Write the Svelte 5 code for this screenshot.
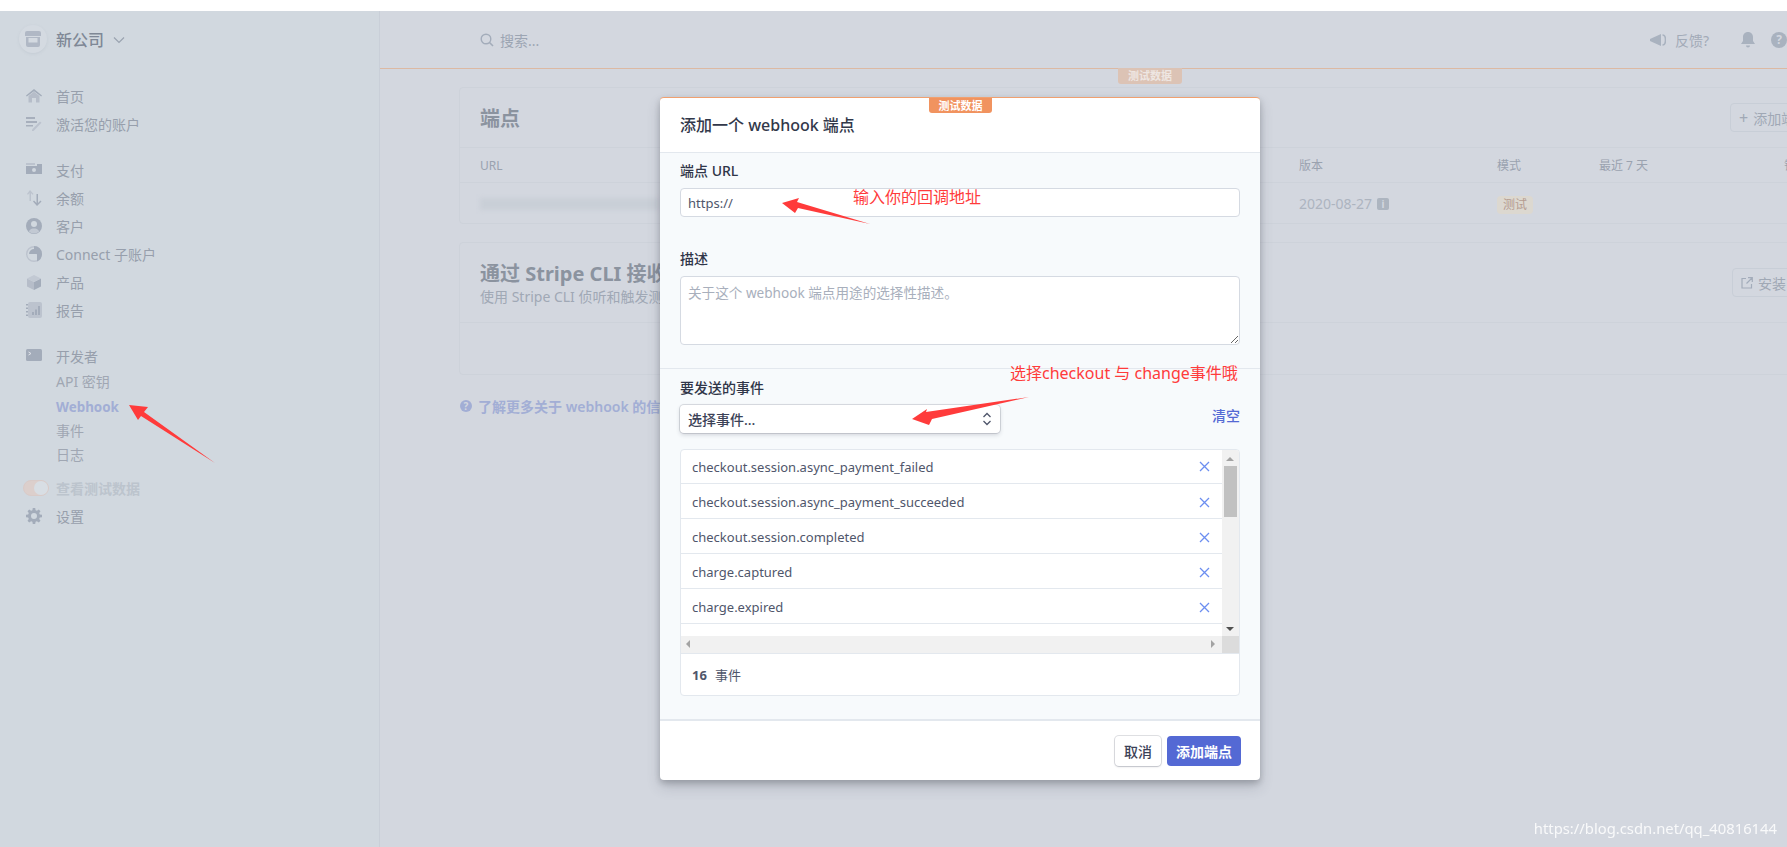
<script>
  const events = [
    "checkout.session.async_payment_failed",
    "checkout.session.async_payment_succeeded",
    "checkout.session.completed",
    "charge.captured",
    "charge.expired"
  ];
</script>

<div class="page">
  <aside class="sidebar">
    <div class="account">
      <span class="logo">
        <svg width="16" height="16" viewBox="0 0 16 16"><path d="M2 0h12a2 2 0 0 1 2 2v3H0V2a2 2 0 0 1 2-2z" fill="#b0b8c5"/><path d="M1 6h14v8a2 2 0 0 1-2 2H3a2 2 0 0 1-2-2z M3.500 7v4.500h9V7z" fill="#b0b8c5" fill-rule="evenodd"/></svg>
      </span>
      <span class="company">新公司</span>
      <svg class="caret" width="12" height="8" viewBox="0 0 12 8"><path d="M1 1.500l5 5 5-5" fill="none" stroke="#9aa3b0" stroke-width="1.200"/></svg>
    </div>

    <nav class="group first">
      <div class="item">
        <svg width="16" height="16" viewBox="0 0 16 16"><path d="M8 1l8 6.500-.8 1L8 3.200.8 8.500 0 7.500z" fill="#a3acba"/><path d="M2.500 8L8 3.800 13.500 8v6.500h-3.500V10H6v4.500H2.500z" fill="#b6bdc9"/></svg>
        <span>首页</span>
      </div>
      <div class="item">
        <svg width="16" height="16" viewBox="0 0 16 16"><path d="M0 1h9v2H0zM0 5h11v2H0zM0 9h7v1.500H0z" fill="#a7afbc"/><path d="M14 5.500l1.500 1.300L7.500 15H6v-1.600z" fill="#bcc3ce"/></svg>
        <span>激活您的账户</span>
      </div>
    </nav>

    <nav class="group">
      <div class="item">
        <svg width="16" height="16" viewBox="0 0 16 16"><path d="M0 1h9v2H0z" fill="#bcc3ce"/><path fill-rule="evenodd" d="M0 4h11V2h5v10H0zM8 6a2 2 0 1 0 0 4 2 2 0 0 0 0-4z" fill="#a3acba"/></svg>
        <span>支付</span>
      </div>
      <div class="item">
        <svg width="16" height="16" viewBox="0 0 16 16"><path d="M4 0l3.500 4-1 .8L5 3v8H3.500V3L2 4.800 1 4z" fill="#bcc3ce"/><path d="M11 16l4.500-4.500-1-1L12 13V4h-1.500v9L8 10.500l-1 1z" fill="#a3acba"/></svg>
        <span>余额</span>
      </div>
      <div class="item">
        <svg width="16" height="16" viewBox="0 0 16 16"><circle cx="8" cy="8" r="8" fill="#a3acba"/><circle cx="8" cy="6" r="3" fill="#d1d8df"/><path d="M2.800 13.500C4 11 6 10.500 8 10.500s4 .5 5.200 3A8 8 0 0 1 2.800 13.500z" fill="#c2c9d3"/></svg>
        <span>客户</span>
      </div>
      <div class="item">
        <svg width="16" height="16" viewBox="0 0 16 16"><circle cx="8" cy="8" r="7.300" fill="none" stroke="#bcc3ce" stroke-width="1.400"/><path d="M8 0a8 8 0 0 1 8 8 8 8 0 0 1-5 7.400V8.500a.5.5 0 0 0-.5-.5H3A5 5 0 0 1 8 3z" fill="#a3acba"/></svg>
        <span>Connect 子账户</span>
      </div>
      <div class="item">
        <svg width="16" height="16" viewBox="0 0 16 16"><path d="M8 8l7-3.500v8L8 16z" fill="#a3acba"/><path d="M8 8L1 4.500v8L8 16z" fill="#b6bdc9"/><path d="M8 1l7 3.500L8 8 1 4.500z" fill="#c2c9d3"/></svg>
        <span>产品</span>
      </div>
      <div class="item">
        <svg width="16" height="16" viewBox="0 0 16 16"><rect x="2" width="14" height="16" rx="2" fill="#bcc3ce"/><path d="M0 2h2v1.500H0zM0 5.500h2V7H0zM0 9h2v1.500H0zM0 12.500h2V14H0zM6 10h2v3H6zM9 7.500h2V13H9zM12 4h2v9h-2z" fill="#a3acba"/></svg>
        <span>报告</span>
      </div>
    </nav>

    <nav class="group">
      <div class="item">
        <svg width="16" height="16" viewBox="0 0 16 16"><rect y="1" width="16" height="12" rx="1.500" fill="#a3acba"/><path d="M2.500 4l2.500 1.500L2.500 7" fill="none" stroke="#e0e4ea" stroke-width="1"/></svg>
        <span>开发者</span>
      </div>
      <div class="sub">API 密钥</div>
      <div class="sub active">Webhook</div>
      <div class="sub">事件</div>
      <div class="sub">日志</div>
    </nav>

    <div class="toggle-row">
      <span class="toggle"><span class="knob"></span></span>
      <span>查看测试数据</span>
    </div>
    <div class="item">
      <svg width="16" height="16" viewBox="0 0 16 16"><path fill-rule="evenodd" d="M6.800 0h2.400l.4 2.200 1.300.6L12.800 1.500 14.500 3.200l-1.300 1.900.6 1.300 2.200.4v2.400l-2.200.4-.6 1.300 1.300 1.900-1.700 1.700-1.900-1.300-1.300.6-.4 2.200H6.800l-.4-2.200-1.300-.6-1.900 1.300-1.700-1.700 1.300-1.900-.6-1.300L0 9.200V6.800l2.200-.4.6-1.300-1.300-1.900 1.700-1.700 1.900 1.300 1.300-.6zM8 5a3 3 0 1 0 0 6 3 3 0 0 0 0-6z" fill="#a3acba"/></svg>
      <span>设置</span>
    </div>
  </aside>

  <main class="main">
    <header class="topbar">
      <div class="search">
        <svg width="14" height="14" viewBox="0 0 14 14"><circle cx="6" cy="6" r="4.800" fill="none" stroke="#a3acba" stroke-width="1.400"/><path d="M9.500 9.500L13 13" stroke="#a3acba" stroke-width="1.600"/></svg>
        <span>搜索...</span>
      </div>
      <div class="tools">
        <svg width="16" height="14" viewBox="0 0 16 14"><path d="M0 6l11-5v12L0 8z" fill="#a9b2bf"/><path d="M12.500 2c2 0 3 2.200 3 5s-1 5-3 5" fill="none" stroke="#a9b2bf" stroke-width="1.600"/></svg>
        <span class="feedback">反馈?</span>
        <svg class="bell" width="14" height="16" viewBox="0 0 14 16"><path d="M7 0c3 0 5 2.200 5 5v4l2 3H0l2-3V5c0-2.800 2-5 5-5zM5 13.500h4a2 2 0 0 1-4 0z" fill="#a9b2bf"/></svg>
        <span class="help">?</span>
      </div>
      <span class="test-tag">测试数据</span>
    </header>

    <section class="content">
      <div class="card endpoints">
        <div class="card-head">
          <h2 class="title">端点</h2>
          <button class="ghost"><span class="plus">+</span>添加端点</button>
        </div>
        <div class="cols heading">
          <span>URL</span><span>版本</span><span>模式</span><span>最近 7 天</span><span>错误率</span>
        </div>
        <div class="cols row">
          <span class="smudge"></span>
          <span class="version">2020-08-27 <i class="info">i</i></span>
          <span><span class="mode">测试</span></span>
          <span></span><span></span>
        </div>
      </div>

      <div class="card cli">
        <div class="card-head tall">
          <div>
            <h2>通过 Stripe CLI 接收事件</h2>
            <p>使用 Stripe CLI 侦听和触发测试事件</p>
          </div>
          <button class="ghost install">
            <svg width="12" height="12" viewBox="0 0 12 12"><path d="M5 1.500H1v9.500h9.500V7M7 .7h4.300V5M11 1L5.500 6.500" fill="none" stroke="#a3acba" stroke-width="1.200"/></svg>
            安装 CLI
          </button>
        </div>
      </div>

      <a class="learn" href="#learn">
        <span class="learn-icon">?</span>
        了解更多关于 webhook 的信息
      </a>
    </section>
  </main>

  <div class="modal">
    <span class="modal-tag">测试数据</span>
    <div class="modal-head">添加一个 webhook 端点</div>
    <div class="modal-body">
      <div class="section">
        <div class="label">端点 URL</div>
        <input class="field" value="https://" />
        <div class="label second">描述</div>
        <textarea class="field area" placeholder="关于这个 webhook 端点用途的选择性描述。"></textarea>
      </div>
      <div class="section events">
        <div class="label">要发送的事件</div>
        <div class="select-row">
          <div class="select">
            <span>选择事件...</span>
            <svg width="10" height="14" viewBox="0 0 10 14"><path d="M1.500 5L5 1.500 8.500 5M1.500 9L5 12.500 8.500 9" fill="none" stroke="#4f566b" stroke-width="1.300"/></svg>
          </div>
          <span class="clear">清空</span>
        </div>
        <div class="list">
          <div class="viewport">
            <div class="rows">
              {#each events as name}
                <div class="event">
                  <span>{name}</span>
                  <svg width="11" height="11" viewBox="0 0 11 11"><path d="M1 1l9 9M10 1l-9 9" stroke="#6c8ef0" stroke-width="1.300"/></svg>
                </div>
              {/each}
            </div>
            <div class="vbar">
              <span class="up"></span>
              <span class="thumb"></span>
              <span class="down"></span>
            </div>
            <div class="hbar">
              <span class="left"></span>
              <span class="right"></span>
            </div>
            <div class="corner"></div>
          </div>
          <div class="count"><b>16</b><span>事件</span></div>
        </div>
      </div>
    </div>
    <div class="modal-foot">
      <button class="btn">取消</button>
      <button class="btn primary">添加端点</button>
    </div>
  </div>

  <svg class="marks" width="1787" height="847" viewBox="0 0 1787 847">
    <polygon points="129,405 148,407 144,412 215,463 141,416 138,420" fill="#ff3b3b"/>
    <polygon points="782,203 799,198 797,202 870,224 798,208 795,213" fill="#ff3b3b"/>
    <polygon points="912,419 927,409 926,412 1029,397 932,419 929,425" fill="#ff3b3b"/>
  </svg>
  <span class="note url-note">输入你的回调地址</span>
  <span class="note event-note">选择checkout 与 change事件哦</span>

  <span class="watermark">https://blog.csdn.net/qq_40816144</span>
</div>

<style>
  :global(body) {
    margin: 0;
    background: #fff;
  }

  .page {
    position: relative;
    width: 1787px;
    height: 847px;
    box-sizing: border-box;
    padding-top: 11px;
    display: flex;
    overflow: hidden;
    font-family: "Noto Sans", "Noto Sans CJK SC", sans-serif;
    font-size: 14px;
    color: #979fac;
  }

  .sidebar {
    width: 379px;
    flex: none;
    background: #d1d8df;
    border-right: 1px solid #c9cfd8;
  }

  .account {
    height: 56px;
    display: flex;
    align-items: center;
    padding-left: 19px;
  }

  .logo {
    width: 28px;
    height: 28px;
    border-radius: 50%;
    background: #d4dae1;
    box-shadow: 0 1px 3px rgba(150, 160, 175, 0.2);
    display: flex;
    align-items: center;
    justify-content: center;
    margin-right: 9px;
  }

  .company {
    font-size: 16px;
    font-weight: 500;
    color: #7f8896;
  }

  .caret {
    margin-left: 9px;
    margin-top: 2px;
  }

  .group {
    margin-top: 18px;
  }

  .group.first {
    margin-top: 15px;
  }

  .item {
    height: 28px;
    display: flex;
    align-items: center;
    gap: 14px;
    padding-left: 26px;
  }

  .sub {
    height: 24px;
    line-height: 24px;
    padding-left: 56px;
    color: #a0a7b3;
  }

  .sub.active {
    margin-top: 1px;
    color: #a2aed5;
    font-size: 13.4px;
    font-weight: 700;
  }

  .toggle-row {
    height: 28px;
    margin-top: 7px;
    display: flex;
    align-items: center;
    gap: 7px;
    padding-left: 23px;
    color: #bcc4cd;
    font-weight: 600;
  }

  .toggle {
    width: 26px;
    height: 16px;
    box-sizing: border-box;
    border-radius: 8px;
    background: #dccfcc;
    border: 1px solid #d9cbc8;
    display: flex;
    justify-content: flex-end;
  }

  .knob {
    width: 14px;
    height: 14px;
    border-radius: 50%;
    background: #d8dee4;
  }

  .main {
    flex: 1;
    min-width: 0;
    background: #d3d7df;
  }

  .topbar {
    position: relative;
    height: 58px;
    box-sizing: border-box;
    border-bottom: 1px solid #dcb9a3;
    display: flex;
    align-items: center;
    justify-content: space-between;
    padding-left: 100px;
  }

  .search {
    display: flex;
    align-items: center;
    gap: 6px;
    color: #9ca5b3;
  }

  .tools {
    display: flex;
    align-items: center;
    color: #a2aab7;
  }

  .feedback {
    margin-left: 9px;
  }

  .bell {
    margin-left: 32px;
  }

  .help {
    width: 16px;
    height: 16px;
    margin-left: 16px;
    border-radius: 50%;
    background: #a9b2bf;
    color: #d3d7df;
    font-size: 12px;
    font-weight: 700;
    line-height: 16px;
    text-align: center;
  }

  .test-tag {
    position: absolute;
    top: 57px;
    left: 738px;
    width: 64px;
    height: 16px;
    border-radius: 0 0 3px 3px;
    background: #dcc3b5;
    color: #eee6e2;
    font-size: 11px;
    font-weight: 700;
    line-height: 16px;
    text-align: center;
  }

  .content {
    padding: 18px 0 0 79px;
  }

  .card {
    width: 1500px;
    box-sizing: border-box;
    border: 1px solid #cdd2da;
    border-radius: 4px;
  }

  .endpoints {
    height: 137px;
  }

  .cli {
    height: 133px;
    margin-top: 18px;
  }

  .card-head {
    height: 59px;
    border-bottom: 1px solid #cdd2da;
    display: flex;
    align-items: center;
    position: relative;
    padding-left: 20px;
  }

  .card-head.tall {
    height: 79px;
  }

  h2 {
    margin: 0;
    font-size: 20px;
    font-weight: 700;
    line-height: 28px;
    color: #8b939f;
  }

  h2.title {
    margin-top: 3px;
  }

  p {
    margin: 0;
    line-height: 18px;
    color: #a0a8b5;
  }

  .ghost {
    position: absolute;
    left: 1270px;
    top: 15px;
    width: 120px;
    height: 29px;
    padding: 0 0 0 8px;
    border: 1px solid #c8ced7;
    border-radius: 4px;
    background: #d3d7df;
    color: #a0a8b5;
    font: inherit;
    display: flex;
    align-items: center;
    gap: 5px;
  }

  .ghost.install {
    left: 1272px;
    top: 25px;
  }

  .plus {
    font-size: 16px;
  }

  .cols {
    display: grid;
    grid-template-columns: 819px 198px 102px 185px 100px;
    align-items: center;
    padding-left: 20px;
  }

  .heading {
    height: 34px;
    border-bottom: 1px solid #cdd2da;
    font-size: 12px;
    color: #9aa2af;
  }

  .row {
    height: 41px;
  }

  .smudge {
    width: 180px;
    height: 12px;
    background: #c9cfd7;
    filter: blur(2px);
  }

  .version {
    font-size: 14px;
    color: #adb4bf;
    display: flex;
    align-items: center;
    gap: 5px;
  }

  .info {
    width: 12px;
    height: 12px;
    border-radius: 2px;
    background: #adb5c0;
    color: #d3d7df;
    font-size: 10px;
    font-style: normal;
    font-weight: 700;
    line-height: 12px;
    text-align: center;
  }

  .mode {
    display: inline-block;
    width: 36px;
    height: 18px;
    border-radius: 4px;
    background: #dcd8d0;
    color: #b59c90;
    font-size: 12px;
    line-height: 18px;
    text-align: center;
  }

  .learn {
    display: inline-flex;
    align-items: center;
    gap: 6px;
    margin: 21px 0 0 1px;
    color: #a2aed5;
    font-weight: 600;
    text-decoration: none;
  }

  .learn-icon {
    width: 12px;
    height: 12px;
    border-radius: 50%;
    background: #a2aed5;
    color: #d3d7df;
    font-size: 10px;
    font-weight: 700;
    line-height: 12px;
    text-align: center;
  }

  .modal {
    position: absolute;
    left: 660px;
    top: 97px;
    width: 600px;
    height: 683px;
    display: flex;
    flex-direction: column;
    background: #fff;
    border-top: 1px solid #f0a070;
    border-radius: 4px;
    box-sizing: border-box;
    box-shadow: 0 7px 14px rgba(60, 66, 87, 0.2), 0 3px 6px rgba(0, 0, 0, 0.2);
    color: #3c4257;
  }

  .modal-tag {
    position: absolute;
    top: 0;
    left: 269px;
    width: 63px;
    height: 15px;
    border-radius: 0 0 3px 3px;
    background: #f1935f;
    color: #fff;
    font-size: 11px;
    font-weight: 700;
    line-height: 15px;
    text-align: center;
  }

  .modal-head {
    height: 54px;
    line-height: 54px;
    padding-left: 20px;
    font-size: 16px;
    font-weight: 500;
    border-bottom: 1px solid #e3e8ee;
    color: #32384a;
  }

  .modal-body {
    flex: 1;
    background: #f7fafc;
    border-bottom: 2px solid #e3e8ee;
  }

  .section {
    padding: 8px 20px 0;
    height: 216px;
    box-sizing: border-box;
    border-bottom: 1px solid #e3e8ee;
  }

  .label {
    height: 20px;
    line-height: 20px;
    font-size: 14px;
    font-weight: 500;
    color: #2f3548;
  }

  .label.second {
    margin-top: 32px;
  }

  .field {
    display: block;
    width: 100%;
    height: 29px;
    box-sizing: border-box;
    margin-top: 7px;
    padding: 0 7px;
    border: 1px solid #d5dae2;
    border-radius: 4px;
    background: #fff;
    font: inherit;
    font-size: 13px;
    color: #4f566b;
    outline: none;
  }

  .area {
    height: 69px;
    padding: 5px 7px;
    font-size: 13.6px;
  }

  .area::placeholder {
    color: #a8afbc;
    opacity: 1;
  }

  .section.events {
    height: auto;
    border-bottom: 0;
    padding-top: 9px;
  }

  .select-row {
    display: flex;
    justify-content: space-between;
    align-items: flex-start;
    margin-top: 7px;
  }

  .select {
    width: 320px;
    height: 28px;
    box-sizing: border-box;
    padding: 0 8px;
    border-radius: 4px;
    background: #fff;
    box-shadow: 0 0 0 1px rgba(60, 66, 87, 0.16), 0 2px 4px rgba(60, 66, 87, 0.2);
    display: flex;
    align-items: center;
    justify-content: space-between;
    font-size: 14px;
    font-weight: 500;
  }

  .clear {
    color: #5469d4;
    font-size: 14px;
    font-weight: 500;
  }

  .list {
    margin-top: 16px;
    height: 247px;
    box-sizing: border-box;
    border: 1px solid #e3e8ee;
    border-radius: 4px;
    background: #fff;
    overflow: hidden;
  }

  .viewport {
    display: grid;
    grid-template-columns: 1fr 17px;
    grid-template-rows: 186px 17px;
    border-bottom: 1px solid #e3e8ee;
  }

  .rows {
    overflow: hidden;
  }

  .event {
    height: 35px;
    box-sizing: border-box;
    border-bottom: 1px solid #e3e8ee;
    display: flex;
    align-items: center;
    justify-content: space-between;
    padding: 2px 12px 0 11px;
    font-size: 13px;
    color: #4f566b;
  }

  .event:first-child {
    height: 34px;
    padding-top: 0;
  }

  .vbar {
    position: relative;
    background: #f1f1f1;
  }

  .thumb {
    position: absolute;
    top: 16px;
    left: 2px;
    right: 2px;
    height: 51px;
    background: #c1c1c1;
  }

  .up,
  .down,
  .left,
  .right {
    position: absolute;
    width: 0;
    height: 0;
    border: 4px solid transparent;
  }

  .up {
    top: 3px;
    left: 4px;
    border-bottom-color: #a3a3a3;
  }

  .down {
    bottom: 1px;
    left: 4px;
    border-top-color: #505050;
  }

  .hbar {
    position: relative;
    background: #f1f1f1;
  }

  .left {
    top: 4px;
    left: 1px;
    border-right-color: #a3a3a3;
  }

  .right {
    top: 4px;
    right: 3px;
    border-left-color: #a3a3a3;
  }

  .corner {
    background: #dcdcdc;
  }

  .count {
    height: 41px;
    display: flex;
    align-items: center;
    gap: 8px;
    padding-left: 11px;
    font-size: 13px;
    color: #4f566b;
  }

  .modal-foot {
    height: 59px;
    display: flex;
    justify-content: flex-end;
    align-items: center;
    gap: 6px;
    padding-right: 19px;
  }

  .btn {
    height: 30px;
    padding: 0 9px;
    border: 0;
    border-radius: 4px;
    background: #fff;
    box-shadow: 0 0 0 1px rgba(60, 66, 87, 0.16), 0 1px 2px rgba(60, 66, 87, 0.2);
    font: inherit;
    font-size: 14px;
    font-weight: 500;
    color: #3c4257;
  }

  .btn.primary {
    background: #5469d4;
    color: #fff;
    font-weight: 600;
    box-shadow: none;
  }

  .marks {
    position: absolute;
    top: 0;
    left: 0;
    pointer-events: none;
  }

  .note {
    position: absolute;
    color: #ff3b3b;
    font-size: 16px;
    line-height: 20px;
    white-space: nowrap;
  }

  .url-note {
    left: 853px;
    top: 187px;
  }

  .event-note {
    left: 1010px;
    top: 363px;
  }

  .watermark {
    position: absolute;
    right: 10px;
    bottom: 10px;
    color: #fff;
    opacity: 0.85;
    font-size: 14.8px;
    line-height: 18px;
    font-family: "Noto Sans", sans-serif;
  }
</style>
